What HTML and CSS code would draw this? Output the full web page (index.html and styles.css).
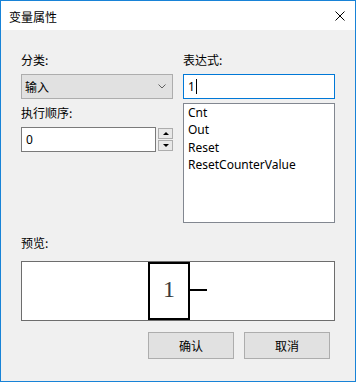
FILE: index.html
```html
<!DOCTYPE html>
<html lang="zh-CN">
<head>
  <meta charset="UTF-8" />
  <title>变量属性</title>
  <link rel="stylesheet" href="styles.css">
</head>
<body>
  <div class="window">
    <div class="titlebar">
      <span class="title">变量属性</span>
      <svg class="close" width="10" height="10" viewBox="0 0 10 10">
        <path d="M0.5 0.5L9.5 9.5M9.5 0.5L0.5 9.5" stroke="#000" stroke-width="1" fill="none"/>
      </svg>
    </div>

    <div class="content">
      <div class="columns">
        <div class="col">
          <div class="label">分类:</div>
          <div class="combo">
            <span>输入</span>
            <svg class="chevron" width="8" height="5" viewBox="0 0 8 5">
              <path d="M0.5 0.5L4 4L7.5 0.5" stroke="#606060" stroke-width="1" fill="none"/>
            </svg>
          </div>
          <div class="label label-gap">执行顺序:</div>
          <div class="spin-row">
            <div class="field">0</div>
            <div class="spin">
              <div class="spin-btn"><span class="arrow-up"></span></div>
              <div class="spin-btn"><span class="arrow-down"></span></div>
            </div>
          </div>
        </div>

        <div class="col">
          <div class="label">表达式:</div>
          <div class="field field-focus">1<span class="caret"></span></div>
          <ul class="listbox">
            <li>Cnt</li>
            <li>Out</li>
            <li>Reset</li>
            <li>ResetCounterValue</li>
          </ul>
        </div>
      </div>

      <div class="label preview-label">预览:</div>
      <div class="preview">
        <div class="block">1</div>
        <div class="wire"></div>
      </div>

      <div class="buttons">
        <button class="btn">确认</button>
        <button class="btn">取消</button>
      </div>
    </div>
  </div>
</body>
</html>
```

FILE: styles.css
```css
html, body {
  margin: 0;
  padding: 0;
}
body {
  font-family: "Noto Sans", "Noto Sans CJK SC", sans-serif;
  font-size: 12px;
  color: #000;
}
.window {
  box-sizing: border-box;
  width: 356px;
  height: 382px;
  border: 1px solid #1883d7;
  background: #f0f0f0;
  display: flex;
  flex-direction: column;
}
.titlebar {
  height: 29px;
  background: #fff;
  display: flex;
  align-items: center;
  justify-content: space-between;
  padding: 0 10px 0 8px;
}
.title {
  font-family: "Noto Sans CJK SC", sans-serif;
  font-size: 12px;
  line-height: 16px;
  margin-top: 3px;
}
.close {
  margin-top: 1px;
}
.content {
  padding: 22px 20px 0 20px;
  display: flex;
  flex-direction: column;
}
.columns {
  display: flex;
  gap: 10px;
}
.col {
  width: 152px;
  display: flex;
  flex-direction: column;
}
.label {
  font-family: "Noto Sans CJK SC", sans-serif;
  line-height: 16px;
  height: 16px;
  margin-bottom: 6px;
}
.label-gap {
  margin-top: 6px;
}
.combo {
  box-sizing: border-box;
  height: 25px;
  background: #e1e1e1;
  border: 1px solid #adadad;
  display: flex;
  align-items: center;
  justify-content: space-between;
  padding: 0 6px 0 3px;
  font-family: "Noto Sans CJK SC", sans-serif;
}
.spin-row {
  display: flex;
  gap: 2px;
}
.field {
  box-sizing: border-box;
  height: 25px;
  flex: 1;
  background: #fff;
  border: 1px solid #7a7a7a;
  padding: 0 4px;
  line-height: 23px;
  display: flex;
  align-items: center;
}
.field-focus {
  flex: none;
  border-color: #0078d7;
}
.caret {
  display: inline-block;
  width: 1px;
  height: 15px;
  background: #000;
  margin-left: 1px;
}
.spin {
  width: 15px;
  display: flex;
  flex-direction: column;
  gap: 1px;
  padding-top: 1px;
}
.spin-btn {
  box-sizing: border-box;
  height: 11px;
  background: #e8e8e8;
  border: 1px solid #adadad;
  display: flex;
  align-items: center;
  justify-content: center;
}
.arrow-up {
  border-left: 3px solid transparent;
  border-right: 3px solid transparent;
  border-bottom: 3px solid #000;
}
.arrow-down {
  border-left: 3px solid transparent;
  border-right: 3px solid transparent;
  border-top: 3px solid #000;
}
.listbox {
  box-sizing: border-box;
  list-style: none;
  margin: 4px 0 0 0;
  padding: 0 4px;
  height: 120px;
  background: #fff;
  border: 1px solid #828790;
}
.listbox li {
  line-height: 17.3px;
}
.preview-label {
  margin-top: 12px;
  margin-bottom: 10px;
}
.preview {
  box-sizing: border-box;
  height: 60px;
  background: #fff;
  border: 1px solid #6d6d6d;
  display: flex;
  align-items: center;
  padding-left: 126px;
}
.block {
  box-sizing: border-box;
  width: 42px;
  height: 58px;
  border: 2px solid #000;
  display: flex;
  align-items: center;
  justify-content: center;
  font-family: "Liberation Serif", serif;
  font-size: 24px;
  color: #3a3a3a;
  padding-bottom: 3px;
}
.wire {
  width: 17px;
  height: 2px;
  background: #000;
  margin-top: -3px;
}
.buttons {
  display: flex;
  justify-content: flex-end;
  gap: 10px;
  margin-top: 11px;
  margin-right: 5px;
}
.btn {
  box-sizing: border-box;
  width: 86px;
  height: 27px;
  background: #e1e1e1;
  border: 1px solid #adadad;
  font-family: "Noto Sans CJK SC", sans-serif;
  font-size: 12px;
  color: #000;
  padding: 0;
}
```
